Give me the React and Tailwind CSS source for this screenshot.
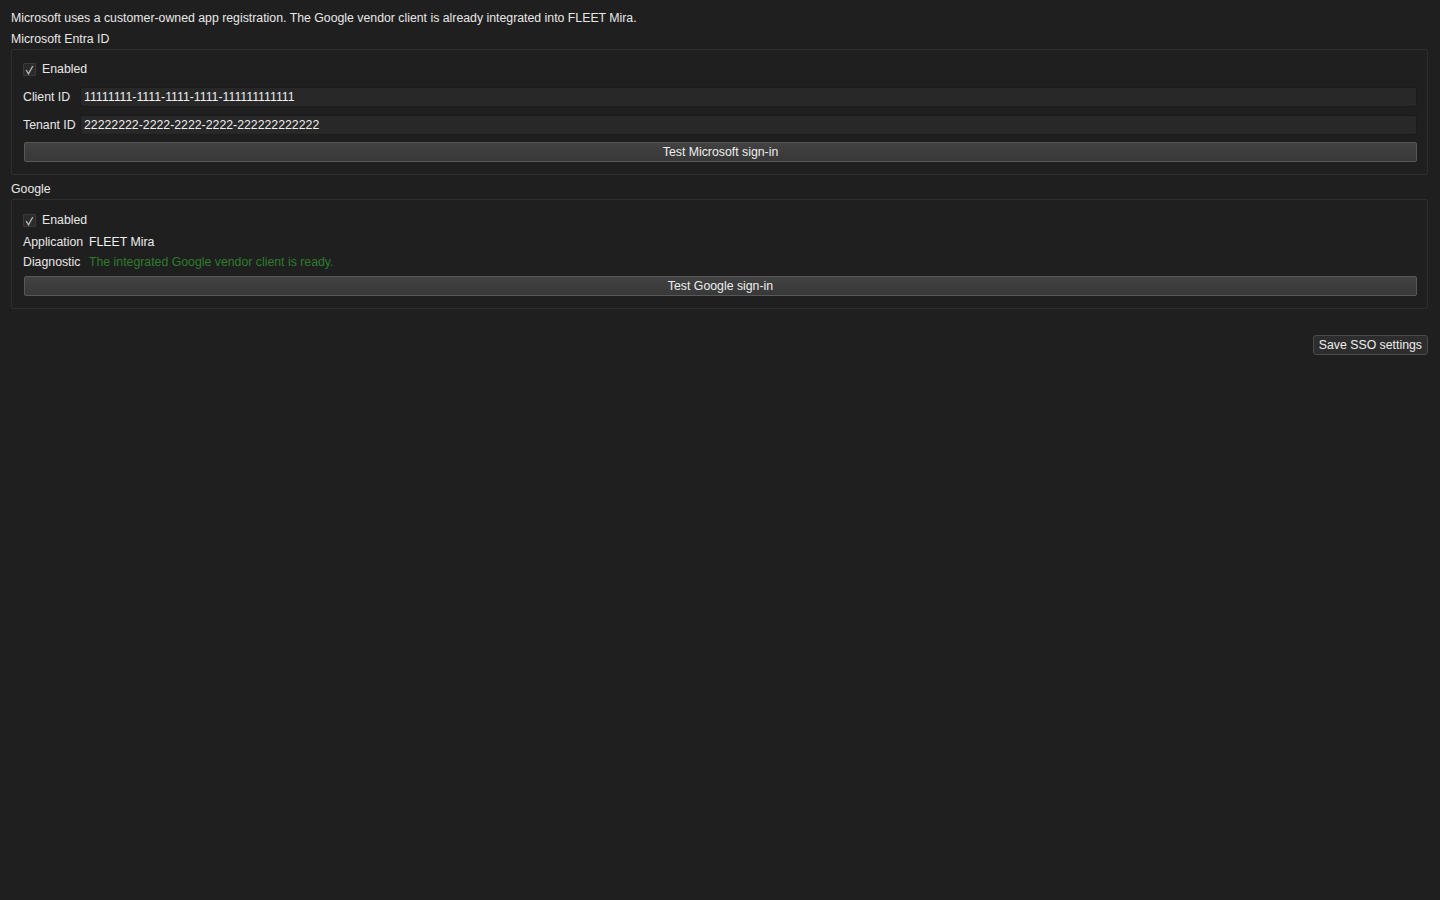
const font = { fontFamily: '"Liberation Sans", Arial, sans-serif' };

function Check({ checked }) {
  return (
    <span className="flex h-[13px] w-[13px] items-center justify-center rounded-[1px] border border-[#3a3a3a] bg-[#2a2a2a]">
      {checked && (
        <svg width="9" height="10" viewBox="0 0 9 10" fill="none">
          <path d="M1.2 5 L3.5 8.8 L7.8 1" stroke="#b4b4b4" strokeWidth="1.4" />
        </svg>
      )}
    </span>
  );
}

function Field({ label, value }) {
  return (
    <div className="flex h-[20px] items-center">
      <span className="w-[57px] shrink-0">{label}</span>
      <div className="flex h-[20px] flex-1 items-center rounded-[2px] border border-[#1b1b1b] bg-[#282828] px-[3px] text-[#f0f0f0]">
        {value}
      </div>
    </div>
  );
}

function WideButton({ children }) {
  return (
    <div className="pl-[1px]">
      <button className="flex h-[20px] w-full items-center justify-center rounded-[2px] border border-[#585858] bg-gradient-to-b from-[#424242] to-[#383838] text-[#eeeeee]">
        {children}
      </button>
    </div>
  );
}

export default function App() {
  return (
    <div className="min-h-screen bg-[#1f1f1f] px-[11px] pt-[11px] text-[12.3px] text-[#e8e8e8]" style={font}>
      <p className="h-[14px] leading-[14px]">
        Microsoft uses a customer-owned app registration. The Google vendor client is already integrated into FLEET Mira.
      </p>
      <p className="mt-[7px] h-[14px] leading-[14px]">Microsoft Entra ID</p>

      <section className="mt-[3px] mr-[1px] rounded-[2px] border border-[#2e2e2e] pl-[11px] pr-[10px] pt-[13px] pb-[12px]">
        <label className="flex h-[13px] items-center gap-[6px]">
          <Check checked />
          <span>Enabled</span>
        </label>
        <div className="mt-[11px] flex flex-col gap-[8px]">
          <Field label="Client ID" value="11111111-1111-1111-1111-111111111111" />
          <Field label="Tenant ID" value="22222222-2222-2222-2222-222222222222" />
        </div>
        <div className="mt-[7px]">
          <WideButton>Test Microsoft sign-in</WideButton>
        </div>
      </section>

      <p className="mt-[7px] h-[14px] leading-[14px]">Google</p>

      <section className="mt-[3px] mr-[1px] rounded-[2px] border border-[#2e2e2e] pl-[11px] pr-[10px] pt-[14px] pb-[12px]">
        <label className="flex h-[13px] items-center gap-[6px]">
          <Check checked />
          <span>Enabled</span>
        </label>
        <div className="mt-[8px] flex h-[14px] items-center leading-[14px]">
          <span className="w-[66px] shrink-0">Application</span>
          <span className="text-[#f0f0f0]">FLEET Mira</span>
        </div>
        <div className="mt-[6px] flex h-[14px] items-center leading-[14px]">
          <span className="w-[66px] shrink-0">Diagnostic</span>
          <span className="text-[#2c7d2c]">The integrated Google vendor client is ready.</span>
        </div>
        <div className="mt-[7px]">
          <WideButton>Test Google sign-in</WideButton>
        </div>
      </section>

      <div className="mt-[26px] flex justify-end pr-[1px]">
        <button className="h-[20px] rounded-[3px] border border-[#4a4a4a] bg-[#2d2d2d] px-[5px] text-[#eeeeee]">
          Save SSO settings
        </button>
      </div>
    </div>
  );
}
